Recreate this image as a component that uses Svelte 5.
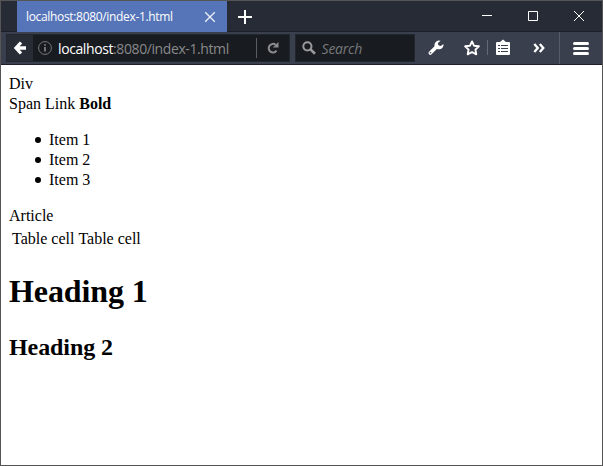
<script>
  const items = ['Item 1', 'Item 2', 'Item 3'];
</script>

<div class="window">
  <header class="titlebar">
    <div class="tab">
      <span class="title">localhost:8080/index-1.html</span>
      <svg class="tab-close" width="12" height="12" viewBox="0 0 12 12"><path d="M1.2 1.2 10.8 10.8M10.8 1.2 1.2 10.8" stroke="#edf1f8" stroke-width="1.3" /></svg>
    </div>
    <svg class="plus" width="14" height="14" viewBox="0 0 14 14"><path d="M7 0V14M0 7H14" stroke="#fff" stroke-width="2" /></svg>
    <div class="controls">
      <svg width="46" height="30" viewBox="0 0 46 30"><path d="M18 14.5H28" stroke="#fff" /></svg>
      <svg width="46" height="30" viewBox="0 0 46 30"><path d="M18.5 10.5H27.5V19.5H18.5Z" fill="none" stroke="#fff" /></svg>
      <svg width="46" height="30" viewBox="0 0 46 30"><path d="M18 10 28 20M28 10 18 20" stroke="#fff" /></svg>
    </div>
  </header>

  <nav class="toolbar">
    <div class="urlbar">
      <div class="back">
        <svg width="26" height="26" viewBox="0 0 26 26"><path d="M14 7.5 9 13l5 5.5M10 13H19" fill="none" stroke="#fff" stroke-width="3.3" /></svg>
      </div>
      <svg class="info" width="14" height="14" viewBox="0 0 14 14"><circle cx="7" cy="7" r="6.4" fill="none" stroke="#77797c" /><path d="M7 6V10.5M7 3.2V4.8" stroke="#8a8c8f" stroke-width="1.6" /></svg>
      <span class="url"><b>localhost</b>:8080/index-1.html</span>
      <i class="divider"></i>
      <svg class="reload" width="12" height="12" viewBox="0 0 12 12"><path d="M8.7 2.8A4.3 4.3 0 1 0 9.5 8.7" fill="none" stroke="#8b8c8e" stroke-width="2" /><path d="M11.5 0V5.6H5.8Z" fill="#8b8c8e" /></svg>
    </div>
    <div class="search">
      <svg width="14" height="14" viewBox="0 0 14 14"><circle cx="5.4" cy="5.3" r="4.1" fill="none" stroke="#999a9b" stroke-width="2" /><path d="M8.5 8.4 13 12.8" stroke="#999a9b" stroke-width="2.6" /></svg>
      <span>Search</span>
    </div>
    <div class="actions">
      <svg width="187" height="32" viewBox="0 0 187 32">
        <path d="M15.3 21 21.8 14.5" stroke="#fff" stroke-width="3.6" stroke-linecap="round" />
        <path d="M25.6 8.8A4.6 4.6 0 0 0 19.4 13.4 4.6 4.6 0 0 0 28.5 12L25.8 13.9 23.3 13.2 22.9 10.9Z" fill="#fff" />
        <circle cx="15.5" cy="20.8" r=".8" fill="#383d4a" />
        <path d="M57 9.4 59.1 13.8 63.9 14.3 60.4 17.6 61.3 22.3 57 20 52.7 22.3 53.6 17.6 50.1 14.3 54.9 13.8Z" fill="none" stroke="#fff" stroke-width="1.9" stroke-linejoin="round" />
        <path d="M72.5 8V23" stroke="#656a76" />
        <path d="M82 10H85L88 7.5 91 10H94Q95 10 95 11V22Q95 23 94 23H82Q81 23 81 22V11Q81 10 82 10Z" fill="#fff" />
        <path d="M83 13.5H85M86 13.5H93M83 16.5H85M86 16.5H93M83 19.5H85M86 19.5H93" stroke="#3b404e" stroke-width="1" />
        <path d="M119.3 12 122.8 16 119.3 20M124.8 12 128.3 16 124.8 20" fill="none" stroke="#fff" stroke-width="2.3" />
        <path d="M144.5 0V32" stroke="#555b69" />
        <path d="M159.5 11.5H172.5M159.5 16.5H172.5M159.5 21.5H172.5" stroke="#fff" stroke-width="3" stroke-linecap="round" />
      </svg>
    </div>
  </nav>

  <main>
    <div>Div</div>
    <span>Span</span> <span>Link</span> <b>Bold</b>
    <ul>
      {#each items as item}<li>{item}</li>{/each}
    </ul>
    <article>Article</article>
    <table><tbody><tr><td>Table cell</td><td>Table cell</td></tr></tbody></table>
    <h1>Heading 1</h1>
    <h2>Heading 2</h2>
  </main>
</div>

<style>
  .window { box-sizing: border-box; width: 603px; height: 466px; border: 1px solid #555; background: #fff; overflow: hidden; display: flex; flex-direction: column; }
  svg { display: block; flex: none; }
  .titlebar { height: 31px; box-sizing: border-box; flex: none; display: flex; align-items: flex-start; background: #272b35; border-bottom: 1px solid #1c1f27; }
  .tab { margin-left: 16px; width: 210px; height: 31px; box-sizing: border-box; padding-left: 9px; background: #5675b9; display: flex; align-items: center; font: 12px/30px "Open Sans", "Noto Sans", sans-serif; color: #fff; }
  .title { width: 178px; white-space: nowrap; letter-spacing: -0.33px; }
  .plus { margin: 9px 0 0 11px; }
  .controls { margin-left: auto; display: flex; }
  .toolbar { height: 33px; box-sizing: border-box; flex: none; display: flex; background: #3a3f4d; border-bottom: 1px solid #1d2029; }
  .urlbar, .search { box-sizing: border-box; height: 28px; margin-top: 2px; border: 1px solid #22262e; background: #181b1f; display: flex; align-items: center; white-space: nowrap; font: 14px/26px "Open Sans", "Noto Sans", sans-serif; }
  .urlbar { width: 285px; margin-left: 5px; }
  .back { width: 26px; height: 26px; background: #282c35; }
  .info { margin-left: 5px; }
  .url { margin: 2px 0 0 6px; line-height: 24px; width: 198px; color: #88898b; letter-spacing: -0.4px; }
  .url b { color: #fff; font-weight: 400; }
  .divider { width: 1px; height: 20px; background: #5b5d60; }
  .reload { margin-left: 10px; }
  .search { width: 121px; margin-left: 5px; padding-left: 6px; font-style: italic; color: #77797b; }
  .search span { margin: 2px 0 0 6px; line-height: 24px; letter-spacing: -0.25px; }
  .actions { width: 187px; }
  main { padding: 9px 8px; font: 16px/20px "Liberation Serif", "Times New Roman", serif; color: #000; }
  ul { margin: 16px 0; padding-left: 26px; list-style: none; }
  li { display: flex; align-items: center; gap: 8px; }
  li::before { content: ""; width: 6px; height: 6px; border-radius: 50%; background: #000; }
  table { border-spacing: 2px; line-height: 20px; }
  td { padding: 1px; }
  h1 { font-size: 32px; line-height: 36px; margin: 21px 0 24px; letter-spacing: -0.1px; }
  h2 { font-size: 24px; line-height: 28px; margin: 0; letter-spacing: -0.08px; }
</style>
